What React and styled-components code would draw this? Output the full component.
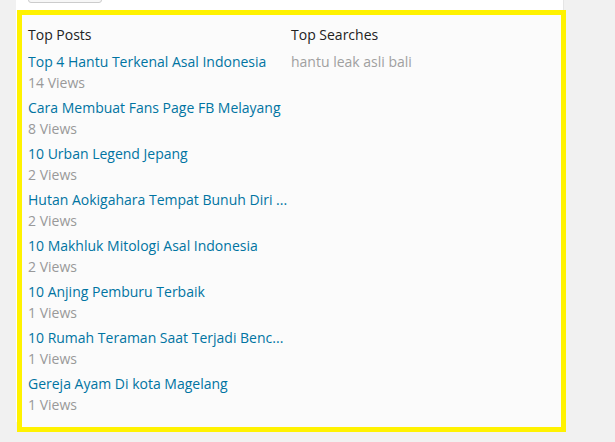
import React from 'react'
import styled, { createGlobalStyle } from 'styled-components'

const posts = [
  { title: 'Top 4 Hantu Terkenal Asal Indonesia', views: 14 },
  { title: 'Cara Membuat Fans Page FB Melayang', views: 8 },
  { title: '10 Urban Legend Jepang', views: 2 },
  { title: 'Hutan Aokigahara Tempat Bunuh Diri ...', views: 2 },
  { title: '10 Makhluk Mitologi Asal Indonesia', views: 2 },
  { title: '10 Anjing Pemburu Terbaik', views: 1 },
  { title: '10 Rumah Teraman Saat Terjadi Benc...', views: 1 },
  { title: 'Gereja Ayam Di kota Magelang', views: 1 },
]

const searches = ['hantu leak asli bali']

const GlobalStyle = createGlobalStyle`
  html, body {
    margin: 0;
    padding: 0;
    background: #f1f1f1;
    font-family: 'Open Sans', 'Noto Sans', sans-serif;
    overflow: hidden;
  }
`

const Page = styled.div`
  width: 615px;
  height: 442px;
  padding-left: 16px;
  box-sizing: border-box;
  overflow: hidden;
`

const Panel = styled.div`
  width: 548px;
  height: 442px;
  background: #fff;
  border-right: 1px solid #e5e5e5;
  box-sizing: border-box;
  padding-left: 1px;
`

const ButtonStub = styled.div`
  margin-left: 11px;
  margin-top: -20px;
  width: 74px;
  height: 23px;
  box-sizing: border-box;
  border: 1px solid #cccccc;
  border-radius: 3px;
  background: #f7f7f7;
`

const Highlight = styled.div`
  margin-top: 7px;
  width: 549px;
  height: 422px;
  box-sizing: border-box;
  border: 5px solid #fff200;
  background: #fbfbfb;
  padding: 10px 6px 0 6px;
  display: grid;
  grid-template-columns: 263px 1fr;
`

const Column = styled.div`
  display: flex;
  flex-direction: column;
  min-width: 0;
`

const Heading = styled.h4`
  margin: 0 0 6px;
  font-size: 14px;
  font-weight: 400;
  line-height: 20px;
  color: #222;
`

const Item = styled.div`
  margin-bottom: 4px;
`

const Link = styled.a`
  display: block;
  font-size: 14px;
  line-height: 21px;
  color: #0074a2;
  text-decoration: none;
  white-space: nowrap;
  overflow: hidden;
`

const Meta = styled.div`
  font-size: 14px;
  line-height: 21px;
  color: ${(p) => p.$tone || '#999'};
`

export default function App() {
  return (
    <Page>
      <GlobalStyle />
      <Panel>
        <ButtonStub />
        <Highlight>
          <Column>
            <Heading>Top Posts</Heading>
            {posts.map((p) => (
              <Item key={p.title}>
                <Link href="#">{p.title}</Link>
                <Meta>{p.views} Views</Meta>
              </Item>
            ))}
          </Column>
          <Column>
            <Heading>Top Searches</Heading>
            {searches.map((s) => (
              <Meta key={s} $tone="#a0a0a0">{s}</Meta>
            ))}
          </Column>
        </Highlight>
      </Panel>
    </Page>
  )
}
